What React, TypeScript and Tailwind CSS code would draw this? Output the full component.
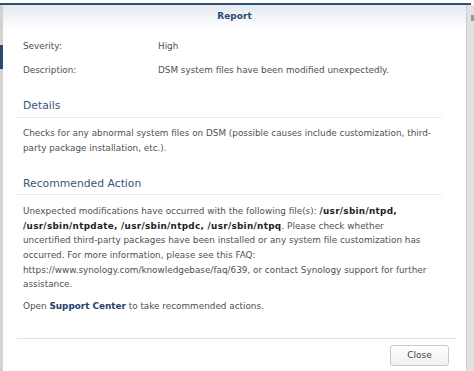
export default function App() {
    return (
        <div className="w-[474px] h-[371px] overflow-hidden bg-white font-['DejaVu_Sans',sans-serif] text-[8.85px] text-[#4f4f4f]">
            <div className="h-[3px] bg-white"></div>
            <div className="h-[2px] w-[471px] bg-[#2f4c72]"></div>
            <div className="flex h-[366px]">
                {/* left edge of page behind */}
                <div className="w-[3px] bg-[#d3d3d3] flex flex-col">
                    <div className="h-[40px]"></div>
                    <div className="h-[24px] bg-[#2d4a70]"></div>
                </div>

                {/* dialog */}
                <div className="flex-1 flex flex-col bg-white border-r border-[#cdcdcd]">
                    <div className="h-[25px] flex items-center justify-center bg-gradient-to-b from-[#e3eaf2] to-white">
                        <span className="font-bold text-[9px] text-[#2b4a70] -mt-[1px]">Report</span>
                    </div>

                    <div className="flex flex-col pt-[5px]">
                        <div className="flex h-[24px] items-center px-[20px]">
                            <span className="w-[135px]">Severity:</span>
                            <span>High</span>
                        </div>
                        <div className="flex h-[24px] items-center px-[20px]">
                            <span className="w-[135px]">Description:</span>
                            <span>DSM system files have been modified unexpectedly.</span>
                        </div>

                        <div className="mt-[13px] ml-[14px] mr-[24px] border-b border-dotted border-[#d6d6d6] pl-[6px] pb-[1px]">
                            <h2 className="text-[10.8px] leading-[20px] text-[#3a5677]">Details</h2>
                        </div>
                        <p className="mt-[8px] pl-[20px] pr-[22px] leading-[14.6px]">
                            Checks for any abnormal system files on DSM (possible causes include customization, third-party package installation, etc.).
                        </p>

                        <div className="mt-[20px] ml-[14px] mr-[24px] border-b border-dotted border-[#d6d6d6] pl-[6px] pb-[1px]">
                            <h2 className="text-[10.8px] leading-[18px] text-[#3a5677]">Recommended Action</h2>
                        </div>
                        <p className="mt-[9px] pl-[20px] pr-[22px] leading-[14.6px]">
                            Unexpected modifications have occurred with the following file(s):{" "}
                            <b className="text-[#1e1e1e] tracking-[0.3px]">/usr/sbin/ntpd, /usr/sbin/ntpdate, /usr/sbin/ntpdc, /usr/sbin/ntpq</b>. Please check whether<br />
                            uncertified third-party packages have been installed or any system file customization has occurred. For more information, please see this FAQ: https://www.synology.com/knowledgebase/faq/639, or contact Synology support for further assistance.
                        </p>
                        <p className="mt-[7px] px-[20px] leading-[14.6px]">
                            Open <b className="text-[#1f3d68]">Support Center</b> to take recommended actions.
                        </p>
                    </div>

                    <div className="mt-auto mx-[14px] mr-[9px] border-t border-[#e2e2e2] flex justify-end pt-[6px] pb-[5px]">
                        <button className="w-[59px] h-[21px] mr-[8px] rounded-[3px] border border-[#c9c9c9] bg-gradient-to-b from-white to-[#eef0f3] text-[9px] text-[#444]">
                            Close
                        </button>
                    </div>
                </div>

                <div className="w-[7px] bg-[#e1e1e1] flex flex-col">
                    <div className="h-[10px]"></div>
                    <div className="ml-[4px] w-[3px] h-[6px] bg-[#9a9a9a]"></div>
                </div>
            </div>
        </div>
    )
}
